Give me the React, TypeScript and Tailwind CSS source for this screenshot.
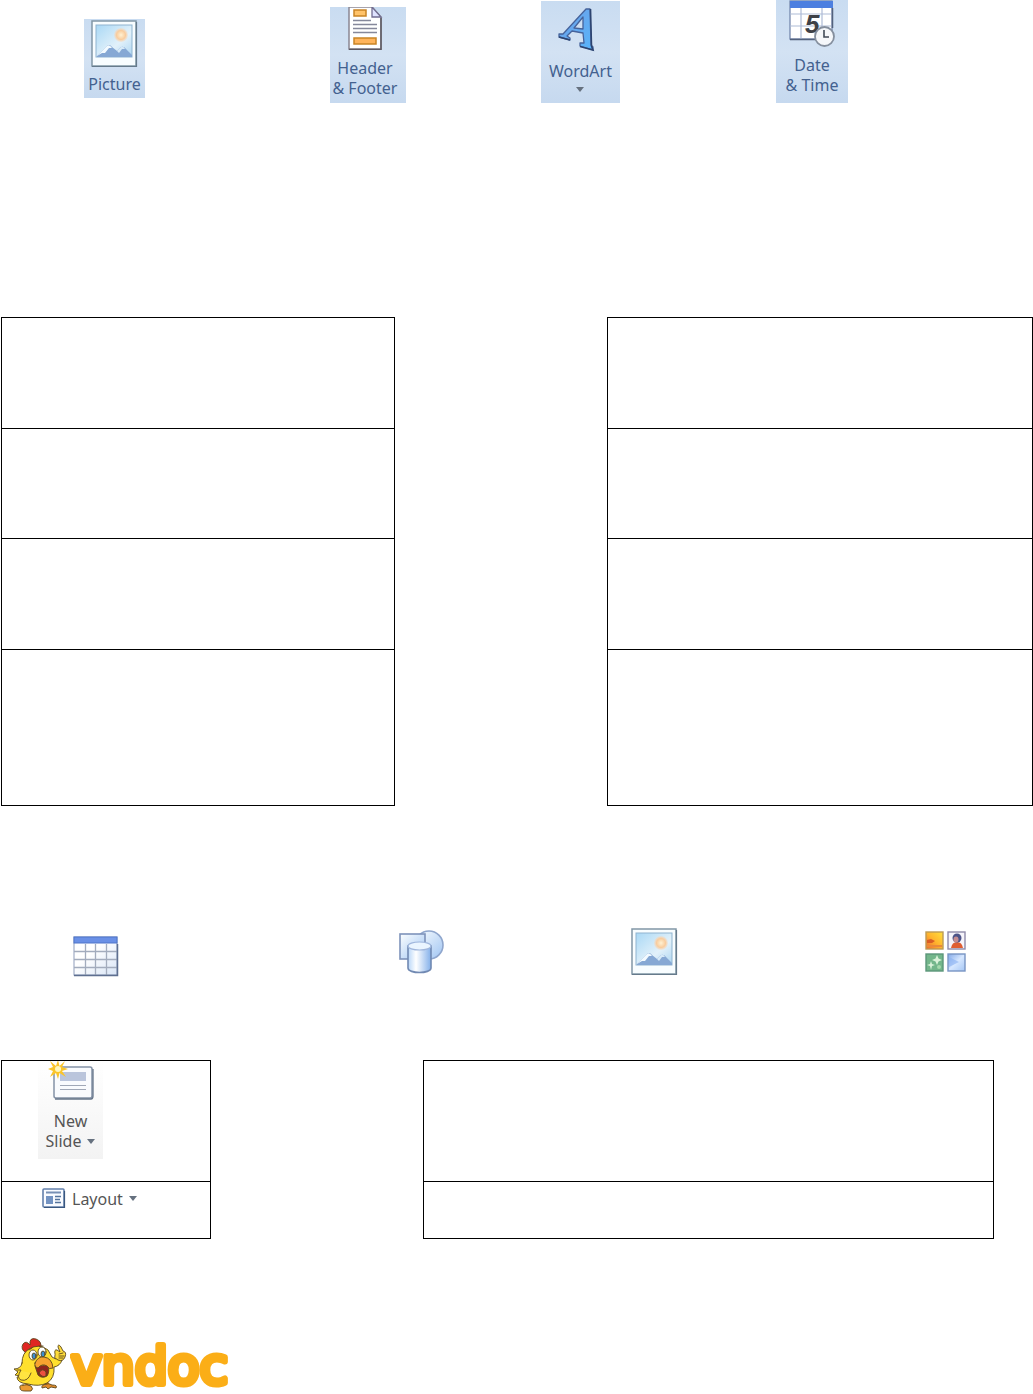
import React, { useId } from "react";

const caption = "font-['Noto_Sans'] text-base leading-5 whitespace-nowrap";

function Caret({ className = "" }: { className?: string }) {
  return (
    <svg viewBox="0 0 8 5" className={`h-[5px] w-2 ${className}`} aria-hidden="true">
      <path d="M0 0H8L4 5Z" fill="#66717f" />
    </svg>
  );
}

function PictureIcon() {
  const id = useId();
  return (
    <svg viewBox="0 0 47 48" className="block h-12 w-[47px]" aria-hidden="true">
      <defs>
        <linearGradient id={id} x1="0" y1="0" x2="1" y2="1">
          <stop offset="0" stopColor="#a9d8f5" />
          <stop offset="0.6" stopColor="#e2f1fa" />
          <stop offset="1" stopColor="#acd5f2" />
        </linearGradient>
        <radialGradient id={`${id}s`}>
          <stop offset="0" stopColor="#fff1d2" />
          <stop offset="0.65" stopColor="#f9cc9d" />
          <stop offset="1" stopColor="#f5d9bf" stopOpacity="0.4" />
        </radialGradient>
      </defs>
      <rect x="1" y="1" width="44" height="45" fill="#f8fdff" stroke="#8197a6" strokeWidth="1.5" />
      <path d="M1 46.500H45.500V2" fill="none" stroke="#667a8b" strokeWidth="1.200" />
      <rect x="5" y="5" width="36" height="32" fill={`url(#${id})`} stroke="#8fb4cf" />
      <circle cx="30" cy="15" r="7" fill={`url(#${id}s)`} />
      <path d="M6 36L15 27Q18 23 21 27L26 31L29 28Q32 25 35 29L41 35V37H6Z" fill="#86a8d4" />
      <path d="M6 36L15 27Q18 23 21 28L18 28L14 33L11 33Z" fill="#f2faff" />
      <path d="M26 31L29 28Q32 25 34 29L31 29L28 33Z" fill="#d7eaf8" />
    </svg>
  );
}

function DocumentIcon() {
  return (
    <svg viewBox="0 0 36 43" className="block h-[43px] w-9" aria-hidden="true">
      <path d="M2 0H25L34 10V42H2Z" fill="#fff" stroke="#8a8792" strokeWidth="1.500" />
      <path d="M34 11V42.500H2" fill="none" stroke="#5c5962" strokeWidth="1.500" />
      <path d="M25 0V10H34Z" fill="#dfe3ff" stroke="#726e92" strokeWidth="1.300" />
      <rect x="7" y="3" width="12" height="6" fill="#ffc36a" stroke="#c98424" strokeWidth="1.500" />
      <path d="M6 13.500H24M6 17.500H30M6 21.500H30M6 25.500H30" stroke="#85889b" strokeWidth="1.500" />
      <rect x="7" y="31" width="22" height="6" fill="#ffb45b" stroke="#c98424" strokeWidth="1.500" />
    </svg>
  );
}

function WordArtIcon() {
  const id = useId();
  return (
    <svg viewBox="5 3 46 46" className="block h-[46px] w-[46px]" aria-hidden="true">
      <defs>
        <linearGradient id={id} x1="0" y1="0" x2="1" y2="1">
          <stop offset="0" stopColor="#6f9fe6" />
          <stop offset="1" stopColor="#58b4fa" />
        </linearGradient>
      </defs>
      <path
        d="M34 5H38L39 41L41 43V46L28 42V39L32 39L31 29L20 27L15 32L18 34V36L7 33V30L11 30ZM31 13L22 24L31 25Z"
        fill={`url(#${id})`}
        fillRule="evenodd"
        stroke="#46639b"
        strokeWidth="1.300"
        strokeLinejoin="round"
      />
      <path d="M38.500 5L39.500 42L41 46L28 42.500M18 36L7 33" fill="none" stroke="#2d4470" strokeWidth="1.600" />
    </svg>
  );
}

function DateIcon() {
  return (
    <svg viewBox="0 0 46 47" className="block h-[47px] w-[46px]" aria-hidden="true">
      <rect x="1" y="1" width="42" height="38" fill="#fff" stroke="#7588ad" strokeWidth="1.300" />
      <rect x="1" y="1" width="43" height="7" fill="#4c7fe0" />
      <path d="M12 8V39M33 8V39M1 14H43M1 26H43" stroke="#aebbd6" strokeWidth="1.200" />
      <path d="M1 39.500H30M43.500 8V28" stroke="#53627d" strokeWidth="1.500" />
      <text x="16" y="33" fontFamily="Liberation Sans, sans-serif" fontWeight="700" fontStyle="italic" fontSize="26" fill="#3e4147">5</text>
      <circle cx="35.500" cy="36.500" r="9.500" fill="#f5f7fa" stroke="#858f9e" strokeWidth="1.800" />
      <path d="M35 30V37H40" fill="none" stroke="#414a57" strokeWidth="1.600" />
    </svg>
  );
}

function TableIcon() {
  const id = useId();
  return (
    <svg viewBox="0 0 46 41" className="block h-[41px] w-[46px]" aria-hidden="true">
      <defs>
        <linearGradient id={id} x1="0" y1="0" x2="1" y2="1">
          <stop offset="0.4" stopColor="#fff" />
          <stop offset="1" stopColor="#d9e5f6" />
        </linearGradient>
      </defs>
      <rect x="1" y="1" width="43" height="38" fill={`url(#${id})`} stroke="#8f9dbb" />
      <rect x="1" y="1" width="43" height="6" fill="#6a90e6" stroke="#4e74c9" />
      <path d="M12.500 8V39M22.500 8V39M33.500 8V39M1 15.500H44M1 23.500H44M1 31.500H44" stroke="#a3acbd" strokeWidth="1.300" />
      <path d="M1 39.500H44.500V8" fill="none" stroke="#5e6f90" strokeWidth="1.500" />
    </svg>
  );
}

function ShapesIcon() {
  const id = useId();
  return (
    <svg viewBox="0 0 46 44" className="block h-11 w-[46px]" aria-hidden="true">
      <defs>
        <linearGradient id={id} x1="0" y1="0" x2="1" y2="1">
          <stop offset="0" stopColor="#fbfeff" />
          <stop offset="1" stopColor="#9fc4f2" />
        </linearGradient>
        <linearGradient id={`${id}c`}>
          <stop offset="0" stopColor="#b8d6f8" />
          <stop offset="0.35" stopColor="#fff" />
          <stop offset="1" stopColor="#83b0ea" />
        </linearGradient>
      </defs>
      <circle cx="30" cy="15" r="14" fill={`url(#${id})`} stroke="#8fa6cd" strokeWidth="1.600" />
      <rect x="1" y="4" width="25" height="25" fill={`url(#${id})`} stroke="#7e93bb" strokeWidth="1.600" />
      <path d="M9 16V38C9 44 32 44 32 38V16Z" fill={`url(#${id}c)`} stroke="#7189b2" strokeWidth="1.600" />
      <ellipse cx="20.500" cy="16" rx="11.500" ry="4" fill="#eaf5ff" stroke="#9fb6dc" strokeWidth="1.200" />
    </svg>
  );
}

function ClipArtIcon() {
  const id = useId();
  return (
    <svg viewBox="0 0 42 42" className="block h-[42px] w-[42px]" aria-hidden="true">
      <defs>
        <linearGradient id={`${id}a`} x1="0" y1="1" x2="1" y2="0">
          <stop offset="0" stopColor="#ee682e" />
          <stop offset="0.5" stopColor="#ffb52d" />
          <stop offset="1" stopColor="#ffe13d" />
        </linearGradient>
        <linearGradient id={`${id}b`} x1="0" y1="0" x2="1" y2="1">
          <stop offset="0" stopColor="#83a9e8" />
          <stop offset="0.5" stopColor="#d6e7ff" />
          <stop offset="1" stopColor="#a5c6f4" />
        </linearGradient>
      </defs>
      <rect x="1" y="1" width="17" height="17" fill={`url(#${id}a)`} stroke="#bd9b54" strokeWidth="1.400" />
      <path d="M2 9L6 8L10 10L7 12H2Z" fill="#d95d26" />
      <path d="M2 15H17" stroke="#e98a3a" strokeWidth="2" />
      <rect x="23" y="1" width="17" height="17" fill="#f6f4fa" stroke="#8f8ba9" strokeWidth="1.400" />
      <path d="M26 17Q27 11 32 11Q37 11 38 17Z" fill="#df5e32" />
      <circle cx="32" cy="7" r="4.500" fill="#4c5488" />
      <ellipse cx="31" cy="8.500" rx="2.500" ry="3" fill="#c58c91" />
      <rect x="1" y="23" width="17" height="17" fill="#73b68a" stroke="#5c967a" strokeWidth="1.400" />
      <path d="M12 24L13.500 27.500L17 29L13.500 30.500L12 34L10.500 30.500L7 29L10.500 27.500ZM6 30L7 33L10 34L7 35L6 39L5 35L2 34L5 33Z" fill="#daf2d9" />
      <circle cx="14" cy="36" r="2" fill="#a6d9ac" />
      <rect x="23" y="23" width="17" height="17" fill={`url(#${id}b)`} stroke="#7895c4" strokeWidth="1.400" />
      <path d="M24 26L34 31L24 36Z" fill="#89b1f1" opacity="0.6" />
    </svg>
  );
}

function NewSlideIcon() {
  return (
    <svg viewBox="0 0 46 42" className="block h-[42px] w-[46px]" aria-hidden="true">
      <rect x="6" y="6" width="38" height="31" rx="2" fill="#f9fbfe" stroke="#8492a6" strokeWidth="1.500" />
      <path d="M7 38H43Q45 38 45 35V8" fill="none" stroke="#66758a" strokeWidth="1.300" />
      <rect x="12" y="11" width="26" height="9" fill="#bac5dc" />
      <path d="M12 24.500H38M12 28.500H38" stroke="#a0a8b7" />
      <path d="M10 -1L11.500 5L17 0L14 6L20 8L14 10L18 16L11.500 12L10 18L8 12L2 16L5 10L0 8L5 6L2 0L8 5Z" fill="#fbc52a" />
      <circle cx="10" cy="8" r="3" fill="#fff8bd" />
    </svg>
  );
}

function LayoutIcon() {
  return (
    <svg viewBox="0 0 24 21" className="block h-[21px] w-6" aria-hidden="true">
      <rect x="1" y="1" width="21" height="18" rx="1" fill="#f9fbff" stroke="#6380ac" strokeWidth="1.600" />
      <path d="M2 19.500H22.500V3" fill="none" stroke="#39577f" strokeWidth="1.200" />
      <path d="M4 4.500H19" stroke="#7790b5" strokeWidth="2" />
      <rect x="4" y="8" width="7" height="8" fill="#7393c2" />
      <path d="M13 8.500H19M13 11.500H18M13 14.500H19" stroke="#55749d" strokeWidth="1.300" />
    </svg>
  );
}

function Mascot() {
  return (
    <svg viewBox="0 0 62 60" className="h-[60px] w-[62px] shrink-0" aria-hidden="true">
      <g stroke="#5a461c" strokeWidth="0.900" strokeLinejoin="round" strokeLinecap="round">
        <path d="M19 48V52M38 47L40 51" stroke="#c9791d" strokeWidth="3" />
        <path d="M15 51Q11 51 12 54Q12 57 17 57H23Q26 55 23 52Q19 50 15 51Z" fill="#ea9a32" />
        <path d="M38 50Q33 51 34 54L38 53L40 55L43 53L48 54Q50 51 44 51Q41 49 38 50Z" fill="#df8a2b" />
        <path d="M18 19Q12 15 15 10Q18 6 22 11Q21 3 28 5Q34 7 33 15L27 18Z" fill="#e02622" />
        <path d="M14 29Q14 19 21 15Q31 9 40 16L44 23Q47 26 51 24L54 26Q52 32 46 33Q47 44 39 49Q31 53 20 50Q9 49 9 43L13 42L7 41L10 38L6 35Q13 35 14 29Z" fill="#ffe02e" />
        <path d="M47 20Q46 15 49 16L52 18L50 13Q50 9 53 13L55 17Q59 18 57 23Q55 28 50 26L47 24Z" fill="#ffdc3a" />
        <path d="M51 20L55 19M51 22L56 22M51 24L55 24" fill="none" />
        <path d="M9 36L13 36Q8 44 13 46Q20 48 23 39" fill="#ffe441" />
        <ellipse cx="25" cy="21" rx="4" ry="5" fill="#fff" />
        <ellipse cx="34" cy="18" rx="4" ry="5" fill="#fff" />
        <ellipse cx="26" cy="22" rx="2" ry="3" fill="#3c8fd0" />
        <ellipse cx="35" cy="20" rx="2" ry="3" fill="#3c8fd0" />
        <path d="M21 16L24 14M31 12L35 12" />
        <path d="M27 32L30 41Q34 45 39 42Q42 38 40 31Z" fill="#8f251e" />
        <path d="M31 39Q34 33 38 38L38 42Q34 44 31 39Z" fill="#ec5140" />
        <path d="M27 29Q30 22 36 23Q44 24 45 34Q41 36 39 32Q34 29 30 34Q26 33 27 29Z" fill="#f7a32f" />
      </g>
    </svg>
  );
}

function Tile({ lines, children, className, caret }: { lines: string[]; children: React.ReactNode; className: string; caret?: boolean }) {
  return (
    <button
      type="button"
      className={`flex flex-col items-center bg-linear-to-b from-[#c9dcf1] via-[#d3e2f3] to-[#c6d9ef] text-[#43618f] ${caption} ${className}`}
    >
      {children}
      {lines.map((line) => (
        <span key={line}>{line}</span>
      ))}
      {caret && <Caret className="mt-1.5" />}
    </button>
  );
}

const line = "border border-black";

export default function App() {
  const matchingRows = ["h-[111px]", "h-[110px]", "h-[111px]", "h-[156px]"];
  return (
    <main className="bg-white">
      <section className="grid grid-cols-[246fr_211fr_235fr_257fr] items-start pl-[8.13%]">
        <Tile lines={["Picture"]} className="mt-[19px] h-[79px] w-[61px] pt-px">
          <PictureIcon />
          <span className="h-1.5" />
        </Tile>
        <Tile lines={["Header", "& Footer"]} className="mt-[7px] h-24 w-[76px] pr-1.5">
          <DocumentIcon />
          <span className="h-2" />
        </Tile>
        <Tile lines={["WordArt"]} caret className="mt-px h-[102px] w-[79px] pt-1.5">
          <WordArtIcon />
          <span className="h-2" />
        </Tile>
        <Tile lines={["Date", "& Time"]} className="h-[103px] w-[72px]">
          <DateIcon />
          <span className="h-2" />
        </Tile>
      </section>

      <table className="mt-[214px] ml-px w-[calc(100%-1px)] table-fixed border-collapse">
        <colgroup>
          <col className="w-[38.100%]" />
          <col className="w-[20.700%]" />
          <col />
        </colgroup>
        <tbody>
          {matchingRows.map((height, i) => (
            <tr key={i} className={height}>
              <td className={line} />
              <td />
              <td className={line} />
            </tr>
          ))}
        </tbody>
      </table>

      <section className="mt-[122px] grid h-12 grid-cols-[325fr_232fr_294fr_108fr] items-start pl-[7.100%]">
        <div className="pt-2"><TableIcon /></div>
        <div className="pt-0.5"><ShapesIcon /></div>
        <div><PictureIcon /></div>
        <div className="pt-[3px]"><ClipArtIcon /></div>
      </section>

      <table className="mt-[84px] ml-px w-[96.100%] table-fixed border-collapse">
        <colgroup>
          <col className="w-[21.100%]" />
          <col className="w-[21.500%]" />
          <col />
        </colgroup>
        <tbody>
          <tr className="h-[121px]">
            <td className={`${line} p-0 align-top`}>
              <button type="button" className={`ml-9 flex h-[98px] w-[65px] flex-col items-center bg-linear-to-b from-white to-[#f3f3f3] text-[#555] ${caption}`}>
                <NewSlideIcon />
                <span className="mt-2">New</span>
                <span className="flex items-center gap-1.5">Slide<Caret /></span>
              </button>
            </td>
            <td />
            <td className={line} />
          </tr>
          <tr className="h-[57px]">
            <td className={`${line} p-0 align-top`}>
              <button type="button" className={`mt-1.5 ml-10 flex items-center gap-1.5 text-[#555] ${caption}`}>
                <LayoutIcon />
                Layout
                <Caret />
              </button>
            </td>
            <td />
            <td className={line} />
          </tr>
        </tbody>
      </table>

      <footer className="mt-[95px] flex h-[60px] items-start pl-2">
        <Mascot />
        <svg viewBox="0 0 180 60" className="h-[60px] w-[180px] shrink-0" role="img" aria-label="vndoc">
          <text x="1" y="50" fontFamily="DejaVu Sans, sans-serif" fontSize="52" fill="#fbae17" stroke="#fbae17" strokeWidth="6" strokeLinejoin="round">
            vndoc
          </text>
        </svg>
      </footer>
    </main>
  );
}
